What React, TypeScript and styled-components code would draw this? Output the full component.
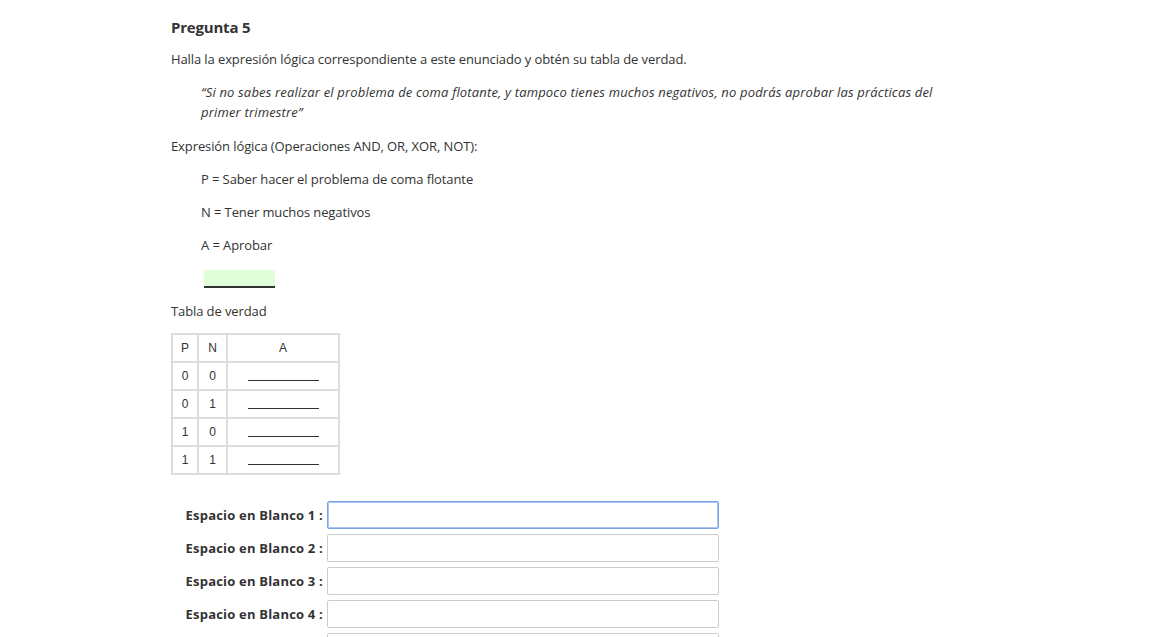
import React from "react";
import styled, { createGlobalStyle } from "styled-components";

const Global = createGlobalStyle`
  html, body { margin: 0; padding: 0; background: #fff; }
  body { font-family: "Open Sans", "Noto Sans", Arial, sans-serif; color: #333; }
`;

const Page = styled.div`
  width: 808px;
  margin: 0 auto;
  padding-top: 16px;
  font-size: 13px;
  line-height: 20px;
`;

const Title = styled.h3`
  margin: 0 0 11px;
  font-size: 15px;
  font-weight: 700;
  line-height: 22px;
  color: #333;
  letter-spacing: -0.2px;
`;

const P = styled.p<{ $indent?: boolean; $italic?: boolean }>`
  margin: 0 0 ${(p) => (p.$italic ? "14px" : "13px")};
  padding-left: ${(p) => (p.$indent ? "30px" : "0")};
  font-style: ${(p) => (p.$italic ? "italic" : "normal")};
  letter-spacing: ${(p) => (p.$italic ? "0.17px" : "-0.1px")};
`;

const GreenBlank = styled.span`
  display: inline-block;
  width: 71px;
  height: 16px;
  margin-left: 3px;
  background: #e0ffd8;
  border-bottom: 2px solid #333;
  vertical-align: top;
`;

const BlankRow = styled.div`
  padding: 2px 0 0 30px;
  height: 18px;
  margin: 0 0 13px;
`;

const Table = styled.table`
  border-collapse: separate;
  border-spacing: 0;
  border: 1px solid #ddd;
  font-family: "Liberation Sans", Arial, sans-serif;
  font-size: 12px;
  margin-top: -1px;
`;

const Cell = styled.td<{ $w: number }>`
  box-sizing: border-box;
  width: ${(p) => p.$w}px;
  height: 28px;
  border: 1px solid #ddd;
  padding: 0;
  text-align: center;
  vertical-align: middle;
  line-height: 14px;
  color: #333;
`;

const LineBlank = styled.span`
  display: block;
  width: 71px;
  height: 0;
  margin: 9px auto 0;
  border-bottom: 1px solid #333;
`;

const Form = styled.div`
  margin-top: 26px;
  display: flex;
  flex-direction: column;
  gap: 5px;
`;

const FieldRow = styled.div`
  display: flex;
  align-items: center;
`;

const Label = styled.label`
  width: 152px;
  text-align: right;
  font-weight: 700;
  font-size: 13px;
  padding-right: 4px;
  letter-spacing: 0.2px;
  color: #333;
`;

const Input = styled.input<{ $focus?: boolean }>`
  box-sizing: border-box;
  width: 392px;
  height: 28px;
  border: 1px solid ${(p) => (p.$focus ? "#7aa3e8" : "#ccc")};
  box-shadow: ${(p) => (p.$focus ? "inset 0 0 0 1px #a8c4f0" : "none")};
  border-radius: 2px;
  outline: none;
  background: #fff;
`;

const rows = [
  ["0", "0"],
  ["0", "1"],
  ["1", "0"],
  ["1", "1"],
];

export default function App() {
  return (
    <>
      <Global />
      <Page>
        <Title>Pregunta 5</Title>
        <P>Halla la expresión lógica correspondiente a este enunciado y obtén su tabla de verdad.</P>
        <P $indent $italic>
          “Si no sabes realizar el problema de coma flotante, y tampoco tienes muchos negativos, no podrás aprobar las prácticas del
          <br />
          primer trimestre”
        </P>
        <P>Expresión lógica (Operaciones AND, OR, XOR, NOT):</P>
        <P $indent>P = Saber hacer el problema de coma flotante</P>
        <P $indent>N = Tener muchos negativos</P>
        <P $indent>A = Aprobar</P>
        <BlankRow>
          <GreenBlank />
        </BlankRow>
        <P>Tabla de verdad</P>
        <Table>
          <tbody>
            <tr>
              <Cell $w={26}>P</Cell>
              <Cell $w={29}>N</Cell>
              <Cell $w={112}>A</Cell>
            </tr>
            {rows.map((r, i) => (
              <tr key={i}>
                <Cell $w={26}>{r[0]}</Cell>
                <Cell $w={29}>{r[1]}</Cell>
                <Cell $w={112}>
                  <LineBlank />
                </Cell>
              </tr>
            ))}
          </tbody>
        </Table>
        <Form>
          {[1, 2, 3, 4, 5].map((n) => (
            <FieldRow key={n}>
              <Label>{n < 5 ? `Espacio en Blanco ${n} :` : ""}</Label>
              <Input $focus={n === 1} />
            </FieldRow>
          ))}
        </Form>
      </Page>
    </>
  );
}
